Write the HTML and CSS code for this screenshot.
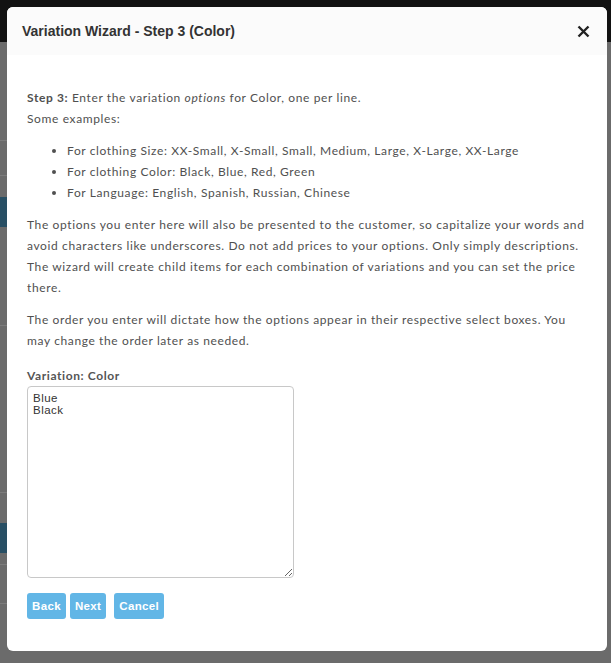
FILE: index.html
```html
<!DOCTYPE html>
<html>
<head>
<meta charset="utf-8">
<title>Variation Wizard</title>
<link rel="stylesheet" href="styles.css">
</head>
<body>
<div class="page">
  <div class="topbar"></div>
  <div class="content">
    <div class="rule r1"></div>
    <div class="rule r2"></div>
    <div class="band b1"></div>
    <div class="rule r3"></div>
    <div class="rule r4"></div>
    <div class="band b2"></div>
    <div class="rule r5"></div>
    <div class="rule r6"></div>
  </div>
</div>
<div class="modal">
  <div class="modal-header">
    <h2 class="modal-title">Variation Wizard - Step 3 (Color)</h2>
    <svg class="close" width="13" height="13" viewBox="0 0 13 13" aria-label="Close">
      <path d="M1.5 1.5 L11.5 11.5 M11.5 1.5 L1.5 11.5" stroke="#222" stroke-width="2.4" stroke-linecap="butt" fill="none"/>
    </svg>
  </div>
  <div class="modal-body">
    <p class="intro"><strong>Step 3:</strong> Enter the variation <em>options</em> for Color, one per line.<br>Some examples:</p>
    <ul class="examples">
      <li>For clothing Size: XX-Small, X-Small, Small, Medium, Large, X-Large, XX-Large</li>
      <li>For clothing Color: Black, Blue, Red, Green</li>
      <li>For Language: English, Spanish, Russian, Chinese</li>
    </ul>
    <p>The options you enter here will also be presented to the customer, so capitalize your words and avoid characters like underscores. Do not add prices to your options. Only simply descriptions. The wizard will create child items for each combination of variations and you can set the price there.</p>
    <p>The order you enter will dictate how the options appear in their respective select boxes. You may change the order later as needed.</p>
    <label class="field-label" for="opts">Variation: Color</label>
    <textarea id="opts" class="options">Blue
Black</textarea>
    <div class="actions">
      <button class="btn">Back</button>
      <button class="btn">Next</button>
      <button class="btn btn-cancel">Cancel</button>
    </div>
  </div>
</div>
</body>
</html>
```
FILE: styles.css
```css
html, body {
  margin: 0;
  padding: 0;
  height: 100%;
  overflow: hidden;
}

body {
  background: #6b6b6b;
  font-family: Lato, "Open Sans", sans-serif;
}

/* underlying page, dimmed behind the dialog */
.page {
  position: absolute;
  inset: 0;
}

.topbar {
  height: 42px;
  background: #121212;
}

.content {
  position: relative;
}

.rule {
  position: absolute;
  left: 0;
  width: 20px;
  height: 1px;
  background: #7c7c7c;
}

.r1 { top: 98px; }
.r2 { top: 133px; }
.r3 { top: 283px; }
.r4 { top: 450px; }
.r5 { top: 522px; }
.r6 { top: 561px; }

.band {
  position: absolute;
  left: 0;
  width: 20px;
  background: #284f64;
}

.b1 { top: 155px; height: 30px; }
.b2 { top: 481px; height: 30px; }

.modal {
  position: absolute;
  top: 7px;
  left: 7px;
  width: 600px;
  height: 644px;
  background: #fff;
  border-radius: 6px;
  overflow: hidden;
}

.modal-header {
  display: flex;
  align-items: center;
  justify-content: space-between;
  height: 48px;
  padding: 0 17px 0 15px;
  background: #fbfbfb;
}

.modal-title {
  margin: 0;
  font-family: "Liberation Sans", Arial, sans-serif;
  font-size: 14px;
  font-weight: bold;
  color: #333;
}

.close {
  display: block;
  margin-top: 1px;
}

.modal-body {
  padding: 32px 20px 0 20px;
  font-size: 12px;
  line-height: 21px;
  color: #505050;
  letter-spacing: 0.62px;
}

.modal-body p {
  margin: 0 0 11px 0;
}

.intro strong {
  font-weight: bold;
}

.examples {
  margin: 11px 0 11px 0;
  padding-left: 40px;
}

.field-label {
  display: block;
  margin-top: 18px;
  font-weight: bold;
  font-size: 12px;
  line-height: 14px;
  letter-spacing: 0.6px;
  color: #555;
}

.options {
  display: block;
  box-sizing: border-box;
  width: 267px;
  height: 192px;
  margin-top: 3px;
  padding: 5px 5px;
  border: 1px solid #c8c8c8;
  border-radius: 4px;
  font-family: "Liberation Sans", Arial, sans-serif;
  font-size: 11.5px;
  line-height: 12px;
  letter-spacing: 0.5px;
  color: #333;
  resize: vertical;
}

.actions {
  display: flex;
  gap: 4px;
  margin-top: 15px;
}

.btn {
  height: 26px;
  padding: 0 5px;
  border: none;
  border-radius: 3px;
  background: #62b6e6;
  color: #fff;
  font-family: "Liberation Sans", Arial, sans-serif;
  font-size: 11.5px;
  font-weight: bold;
  letter-spacing: 0.35px;
}

.btn-cancel {
  margin-left: 4px;
}
```
